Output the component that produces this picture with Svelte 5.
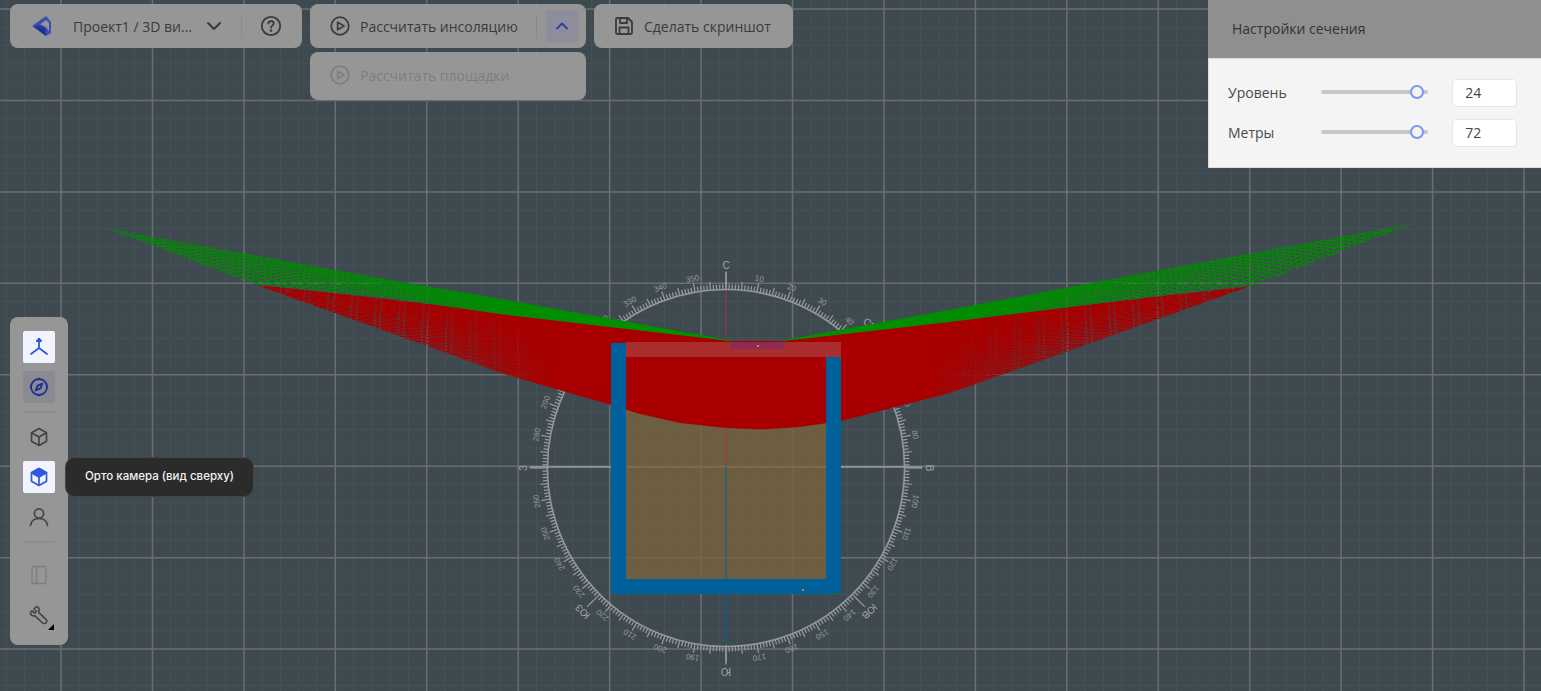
<script lang="ts">
  // Section view of the insolation scene: free canvas in SVG, floating panels on top
  const W = 1541;
  const H = 691;
  const STEP = 91.44;
  const CX = 726;
  const CY = 468;
  const R = 178.5;

  const range = (from: number, to: number, step: number) => {
    const out: number[] = [];
    for (let v = from; v <= to; v += step) out.push(v);
    return out;
  };

  const majorX = range(61 - STEP, W, STEP);
  const majorY = range(9, H, STEP);
  const minorX = range(61 - STEP, W, STEP / 5);
  const minorY = range(9 - STEP, H, STEP / 5);

  const degs = range(0, 359, 1);
  const tens = range(10, 350, 10).filter((d) => d % 90 !== 0);
  const cardinals = [
    { d: 0, t: 'С' }, { d: 45, t: 'СВ' }, { d: 90, t: 'В' }, { d: 135, t: 'ЮВ' },
    { d: 180, t: 'Ю' }, { d: 225, t: 'ЮЗ' }, { d: 270, t: 'З' }
  ];

  // rows of the sun grid: rays from the apex to points along the outer edge
  const rows = (ax: number, ay: number, x0: number, y0: number, x1: number, y1: number, n: number) =>
    Array.from({ length: n }, (_, i) => {
      const t = i / (n - 1);
      return { x1: ax, y1: ay, x2: x0 + (x1 - x0) * t, y2: y0 + (y1 - y0) * t, shift: (i * 5.5) % 11 };
    });

  const greenRows = [
    ...rows(745, 342, 104, 228, 256, 285, 19),
    ...rows(768, 342, 1414, 223, 1256, 285, 19)
  ];
  const redRows = [
    ...rows(757, 342, 256, 285, 540, 386, 60),
    ...rows(757, 342, 1250, 287, 960, 390, 60)
  ];

  const greenLeft = '104,228 390,280 500,299 735,341.5 500,314 390,298 256,285 180,256 138,240';
  const greenRight = '1414,223 1150,272 950,310 778,341.5 950,322 1150,297 1256,285 1297,269 1323,259 1350,248';
  const redShape =
    '256,285 390,298 500,314 733,341.5 780,341.5 950,322 1150,297 1250,286 1100,340 950,393 880,411 841,421 800,427 760,429.5 726,428 680,423 640,414 611,405 500,373 400,337';
</script>

<div class="scene">
  <svg class="canvas" width={W} height={H} viewBox="0 0 {W} {H}" xmlns="http://www.w3.org/2000/svg">
    <defs>
      <linearGradient id="redFade" gradientUnits="userSpaceOnUse" x1="256" y1="0" x2="1250" y2="0">
        <stop offset="0.17" stop-color="#a80000" stop-opacity="0" />
        <stop offset="0.3" stop-color="#a80000" />
        <stop offset="0.68" stop-color="#a80000" />
        <stop offset="0.83" stop-color="#a80000" stop-opacity="0" />
      </linearGradient>
      <linearGradient id="greenFade" gradientUnits="userSpaceOnUse" x1="104" y1="0" x2="1414" y2="0">
        <stop offset="0.2" stop-color="#008a00" stop-opacity="0" />
        <stop offset="0.36" stop-color="#009000" />
        <stop offset="0.6" stop-color="#009000" />
        <stop offset="0.8" stop-color="#008a00" stop-opacity="0" />
      </linearGradient>
      <clipPath id="greenClip"><polygon points={greenLeft} /><polygon points={greenRight} /></clipPath>
      <clipPath id="redClip"><polygon points={redShape} /></clipPath>
    </defs>

    <!-- grid -->
    {#each minorX as x}<line x1={x} y1="0" x2={x} y2={H} stroke="#475258" />{/each}
    {#each minorY as y}<line x1="0" y1={y} x2={W} y2={y} stroke="#475258" />{/each}
    {#each majorX as x}<line x1={x} y1="0" x2={x} y2={H} stroke="#6a6e70" stroke-width="1.5" />{/each}
    {#each majorY as y}<line x1="0" y1={y} x2={W} y2={y} stroke="#6a6e70" stroke-width="1.5" />{/each}

    <!-- compass -->
    <g class="compass">
      <circle cx={CX} cy={CY} r={R} fill="none" stroke="#93969a" stroke-width="1.6" />
      {#each degs as d}
        <line
          x1={CX} y1={CY - R} x2={CX}
          y2={CY - R - (d % 45 === 0 ? 18 : d % 10 === 0 ? 9 : d % 5 === 0 ? 8 : 5)}
          stroke="#9a9da0"
          stroke-width="1.2"
          transform="rotate({d} {CX} {CY})"
        />
      {/each}
      {#each tens as d}
        <text class="deg" x={CX} y={CY - R - 11} transform="rotate({d} {CX} {CY})">{d}</text>
      {/each}
      {#each cardinals as c}
        <text class="card" x={CX} y={CY - R - 21} transform="rotate({c.d} {CX} {CY})">{c.t}</text>
      {/each}
    </g>

    <!-- axes -->
    <line x1="530" y1="467" x2="922" y2="467" stroke="#9a9da0" stroke-width="1.4" />
    <line x1="726" y1="272" x2="726" y2="290" stroke="#a3a6a8" />
    <line x1="726" y1="645" x2="726" y2="663" stroke="#a3a6a8" />

    <!-- floor -->
    <rect x="626" y="357" width="200" height="222" fill="#78633f" fill-opacity="0.82" />
    <line x1="726" y1="290" x2="726" y2="466" stroke="#a8343a" />
    <line x1="726" y1="467" x2="726" y2="645" stroke="#00609a" />

    <!-- sun grid -->
    <g clip-path="url(#redClip)">
      {#each redRows as r}
        <line x1={r.x1} y1={r.y1} x2={r.x2} y2={r.y2} stroke="#a80000" stroke-width="1.3" stroke-dasharray="22 2" stroke-dashoffset={r.shift} />
      {/each}
    </g>
    <polygon points={redShape} fill="url(#redFade)" />
    <g clip-path="url(#greenClip)">
      {#each greenRows as r}
        <line x1={r.x1} y1={r.y1} x2={r.x2} y2={r.y2} stroke="#008c00" stroke-width="1.6" stroke-dasharray="7 4" stroke-dashoffset={r.shift} />
      {/each}
    </g>
    <polygon points={greenLeft} fill="url(#greenFade)" />
    <polygon points={greenRight} fill="url(#greenFade)" />

    <!-- building -->
    <rect x="626" y="342" width="215" height="15" fill="#aa2e2e" />
    <rect x="730" y="342" width="55" height="7" fill="#8e2b55" />
    <rect x="611" y="343" width="15" height="251" fill="#00609a" />
    <rect x="826" y="357" width="15" height="237" fill="#00609a" />
    <rect x="626" y="579" width="200" height="15" fill="#00609a" />
    <line x1="831" y1="593.5" x2="840" y2="593.5" stroke="#0a7a2a" />
    <rect x="757" y="345" width="2" height="2" fill="#c8873a" />
    <rect x="802" y="589" width="2" height="2" fill="#a58a3a" />
  </svg>

  <div class="topbar">
    <div class="panel project">
      <svg class="logo" width="20" height="20" viewBox="0 0 20 20" xmlns="http://www.w3.org/2000/svg">
        <polygon points="0,10 14,0 19,6 19,17 14,20" fill="#3c50ad" />
        <polygon points="8,8.5 14,4 17,7 17,15 14,11.5" fill="#94949a" />
        <polygon points="1,10.5 8,8.5 14,11.5 14,20" fill="#2a3d9c" />
        <polygon points="3,11 12,13 14,20" fill="#1d2f8e" />
      </svg>
      <span class="label name">Проект1 / 3D ви...</span>
      <svg class="chev" width="20" height="20" viewBox="0 0 20 20" fill="none" stroke="#3a3a3a" stroke-width="2" stroke-linecap="round" stroke-linejoin="round">
        <path d="M4 7 L10 13 L16 7" />
      </svg>
      <i class="sep"></i>
      <svg width="22" height="22" viewBox="0 0 22 22" fill="none" stroke="#3a3a3a" stroke-width="1.8" stroke-linecap="round">
        <circle cx="11" cy="11" r="9.2" />
        <path d="M8.4 8.6 C8.4 5.4 13.7 5.4 13.7 8.6 C13.7 10.6 11 10.6 11 12.6" />
        <circle cx="11" cy="15.6" r="0.5" fill="#3a3a3a" />
      </svg>
    </div>

    <div class="stack">
      <div class="panel run">
        <svg width="20" height="20" viewBox="0 0 20 20" fill="none" stroke="#3a3a3a" stroke-width="1.7" stroke-linejoin="round">
          <circle cx="10" cy="10" r="8.8" />
          <path d="M7.6 6.2 L14 10 L7.6 13.8 Z" />
        </svg>
        <span class="label">Рассчитать инсоляцию</span>
        <i class="sep"></i>
        <button class="up" aria-label="Свернуть">
          <svg width="14" height="10" viewBox="0 0 14 10" fill="none" stroke="#2a3fa6" stroke-width="1.8" stroke-linecap="round" stroke-linejoin="round">
            <path d="M2 7.5 L7 2.5 L12 7.5" />
          </svg>
        </button>
      </div>
      <div class="panel run tall disabled">
        <svg width="20" height="20" viewBox="0 0 20 20" fill="none" stroke="#7e7e7e" stroke-width="1.7" stroke-linejoin="round">
          <circle cx="10" cy="10" r="8.8" />
          <path d="M7.6 6.2 L14 10 L7.6 13.8 Z" />
        </svg>
        <span class="label">Рассчитать площадки</span>
      </div>
    </div>

    <div class="panel shot">
      <svg width="20" height="20" viewBox="0 0 20 20" fill="none" stroke="#3a3a3a" stroke-width="1.8" stroke-linejoin="round">
        <path d="M2 3.2 Q2 2 3.2 2 H14 L18 6 V16.8 Q18 18 16.8 18 H3.2 Q2 18 2 16.8 Z" />
        <path d="M6 2 V7 H13 V2" />
        <path d="M5.5 18 V11.5 H14.5 V18" />
      </svg>
      <span class="label">Сделать скриншот</span>
    </div>
  </div>

  <section class="settings">
    <header>Настройки сечения</header>
    <div class="settings-body">
      <div class="row">
        <span>Уровень</span>
        <div class="slider"><i class="knob"></i></div>
        <div class="num">24</div>
      </div>
      <div class="row">
        <span>Метры</span>
        <div class="slider"><i class="knob"></i></div>
        <div class="num">72</div>
      </div>
    </div>
  </section>

  <nav class="tools">
    <button class="tool on" aria-label="Оси">
      <svg width="22" height="22" viewBox="0 0 22 22" fill="none" stroke="#2f57e0" stroke-width="1.8" stroke-linecap="round" stroke-linejoin="round">
        <path d="M11 3 V12 L3 18 M11 12 L19 18" />
        <path d="M8.8 5 L11 2.6 L13.2 5 Z" fill="#2f57e0" />
      </svg>
    </button>
    <button class="tool pressed" aria-label="Компас">
      <svg width="20" height="20" viewBox="0 0 20 20" fill="none" stroke="#1c2f96" stroke-width="1.8" stroke-linejoin="round">
        <circle cx="10" cy="10" r="8" />
        <path d="M13.4 6.6 L11.4 11.4 L6.6 13.4 L8.6 8.6 Z" />
        <path d="M10 0.8 V3 M10 17 V19.2 M0.8 10 H3 M17 10 H19.2" />
      </svg>
    </button>
    <i class="rule"></i>
    <button class="tool" aria-label="Перспектива">
      <svg width="18" height="20" viewBox="0 0 18 20" fill="none" stroke="#444" stroke-width="1.7" stroke-linejoin="round">
        <path d="M9 1.5 L16.5 5.7 V14.3 L9 18.5 L1.5 14.3 V5.7 Z" />
        <path d="M1.5 5.7 L9 10 L16.5 5.7 M9 10 V18.5" />
      </svg>
    </button>
    <button class="tool on" aria-label="Орто камера">
      <svg width="18" height="20" viewBox="0 0 18 20" xmlns="http://www.w3.org/2000/svg" stroke="#2f57e0" stroke-width="1.7" stroke-linejoin="round">
        <path d="M9 1.5 L16.5 5.7 V14.3 L9 18.5 L1.5 14.3 V5.7 Z" fill="#f1f4ff" />
        <path d="M1.5 5.7 L9 1.5 L16.5 5.7 L9 10 Z" fill="#2f57e0" />
        <path d="M9 10 V18.5" fill="none" />
      </svg>
    </button>
    <button class="tool" aria-label="От первого лица">
      <svg width="20" height="20" viewBox="0 0 20 20" fill="none" stroke="#444" stroke-width="1.7" stroke-linecap="round">
        <circle cx="10" cy="6.5" r="4.6" />
        <path d="M1.5 18.5 C2 14 5.5 11.5 10 11.5 C14.5 11.5 18 14 18.5 18.5" />
      </svg>
    </button>
    <i class="rule"></i>
    <button class="tool after-rule" aria-label="Панель">
      <svg width="16" height="20" viewBox="0 0 16 20" fill="none" stroke="#7e7e7e" stroke-width="1.4">
        <rect x="1" y="1.5" width="14" height="17" rx="1" />
        <path d="M5.5 1.5 V18.5" />
      </svg>
    </button>
    <button class="tool wrench" aria-label="Инструменты">
      <svg width="20" height="20" viewBox="0 0 20 20" fill="none" stroke="#444" stroke-width="1.6" stroke-linejoin="round">
        <path d="M7.5 1.5 L5 4 L7.5 6.5 L5.6 8.2 L3 5.8 L1.5 7.5 C1.4 10 3.4 11.4 6 10.8 L13.5 18 C14.5 18.8 16.5 18.8 17.2 17.6 C18 16.5 17.8 15.2 17 14.4 L9.8 7.6 C10.6 4.4 9.4 2 7.5 1.5 Z" />
      </svg>
      <i class="corner"></i>
    </button>
    <div class="tip">Орто камера (вид сверху)</div>
  </nav>
</div>

<style>
  :global(body) {
    margin: 0;
    background: #3f4a50;
  }

  .scene {
    position: relative;
    width: 1541px;
    height: 691px;
    overflow: hidden;
    background: #3f4a50;
    font-family: "Open Sans", "Noto Sans", sans-serif;
    font-size: 14px;
    color: #3a3a3a;
  }

  .canvas {
    position: absolute;
    inset: 0;
    display: block;
  }

  .deg,
  .card {
    font-family: "Liberation Sans", sans-serif;
    text-anchor: middle;
    fill: #a3a6a8;
  }

  .deg {
    font-size: 8px;
    opacity: 0.85;
  }

  .card {
    font-size: 10px;
  }

  .topbar {
    position: absolute;
    top: 4px;
    left: 10px;
    display: flex;
    align-items: flex-start;
    gap: 8px;
  }

  .stack {
    display: flex;
    flex-direction: column;
    gap: 4px;
  }

  .panel {
    display: flex;
    align-items: center;
    height: 44px;
    box-sizing: border-box;
    background: #969696;
    border-radius: 8px;
  }

  .project {
    width: 292px;
    padding-left: 22px;
  }

  .logo {
    margin-right: 21px;
  }

  .name {
    width: 131px;
  }

  .chev {
    margin-right: 17px;
  }

  .project .sep {
    margin-right: 18px;
  }

  .sep {
    width: 1px;
    height: 24px;
    background: #8a8a8a;
  }

  .run {
    width: 276px;
    padding-left: 20px;
    gap: 10px;
  }

  .run .sep {
    margin-left: 8px;
  }

  .run.tall {
    height: 48px;
    padding-bottom: 2px;
  }

  .disabled {
    color: #7e7e7e;
  }

  .up {
    display: flex;
    align-items: center;
    justify-content: center;
    width: 32px;
    height: 32px;
    padding: 0;
    border: 0;
    border-radius: 2px;
    background: #8d8d9b;
    margin-left: -1px;
  }

  .shot {
    width: 199px;
    padding-left: 20px;
    gap: 10px;
  }

  .settings {
    position: absolute;
    top: 0;
    right: 0;
    width: 333px;
  }

  .settings header {
    height: 58px;
    box-sizing: border-box;
    padding: 19px 24px 0;
    line-height: 20px;
    background: #8f8f8f;
    color: #333;
  }

  .settings-body {
    height: 110px;
    box-sizing: border-box;
    padding: 20px 24px 0 19px;
    display: flex;
    flex-direction: column;
    gap: 12px;
    background: #f4f4f4;
    border: 1px solid #dcdcdc;
    border-right: 0;
    color: #4a4a4a;
  }

  .row {
    display: flex;
    align-items: center;
    height: 28px;
  }

  .row span {
    width: 93px;
    padding-bottom: 1px;
  }

  .slider {
    position: relative;
    width: 108px;
    height: 4px;
    margin: 0 24px 2px 0;
    border-radius: 2px;
    background: #c6c6c6;
  }

  .knob {
    position: absolute;
    top: -5px;
    left: 89px;
    width: 10px;
    height: 10px;
    border: 2px solid #7d97f2;
    border-radius: 50%;
    background: #f4f4f4;
  }

  .num {
    width: 65px;
    height: 28px;
    box-sizing: border-box;
    padding-left: 12px;
    line-height: 26px;
    background: #fff;
    border: 1px solid #e6e6e6;
    border-radius: 4px;
    color: #444;
  }

  .tools {
    position: absolute;
    top: 317px;
    left: 10px;
    width: 58px;
    height: 328px;
    box-sizing: border-box;
    padding-top: 14px;
    display: flex;
    flex-direction: column;
    align-items: center;
    gap: 8px;
    background: #969696;
    border-radius: 8px;
  }

  .tool {
    position: relative;
    display: flex;
    align-items: center;
    justify-content: center;
    width: 32px;
    height: 32px;
    padding: 0;
    border: 0;
    border-radius: 2px;
    background: transparent;
    flex: none;
  }

  .tool.on {
    background: #f1f4ff;
  }

  .tool.pressed {
    background: #8a8a90;
  }

  .tool.after-rule {
    margin-top: 8px;
  }

  .rule {
    width: 32px;
    height: 2px;
    background: #8c8c8c;
    flex: none;
  }

  .corner {
    position: absolute;
    right: 1px;
    bottom: 1px;
    width: 0;
    height: 0;
    border-style: solid;
    border-width: 0 0 6px 6px;
    border-color: transparent transparent #000 transparent;
  }

  .tip {
    position: absolute;
    top: 140px;
    left: 55px;
    width: 189px;
    height: 40px;
    box-sizing: border-box;
    padding-left: 19px;
    line-height: 37px;
    background: #2b2b2b;
    border: 1px solid #444;
    border-radius: 10px;
    color: #f2f2f2;
    font-family: Inter, sans-serif;
    font-size: 11.5px;
    font-weight: 500;
    white-space: nowrap;
  }
</style>
